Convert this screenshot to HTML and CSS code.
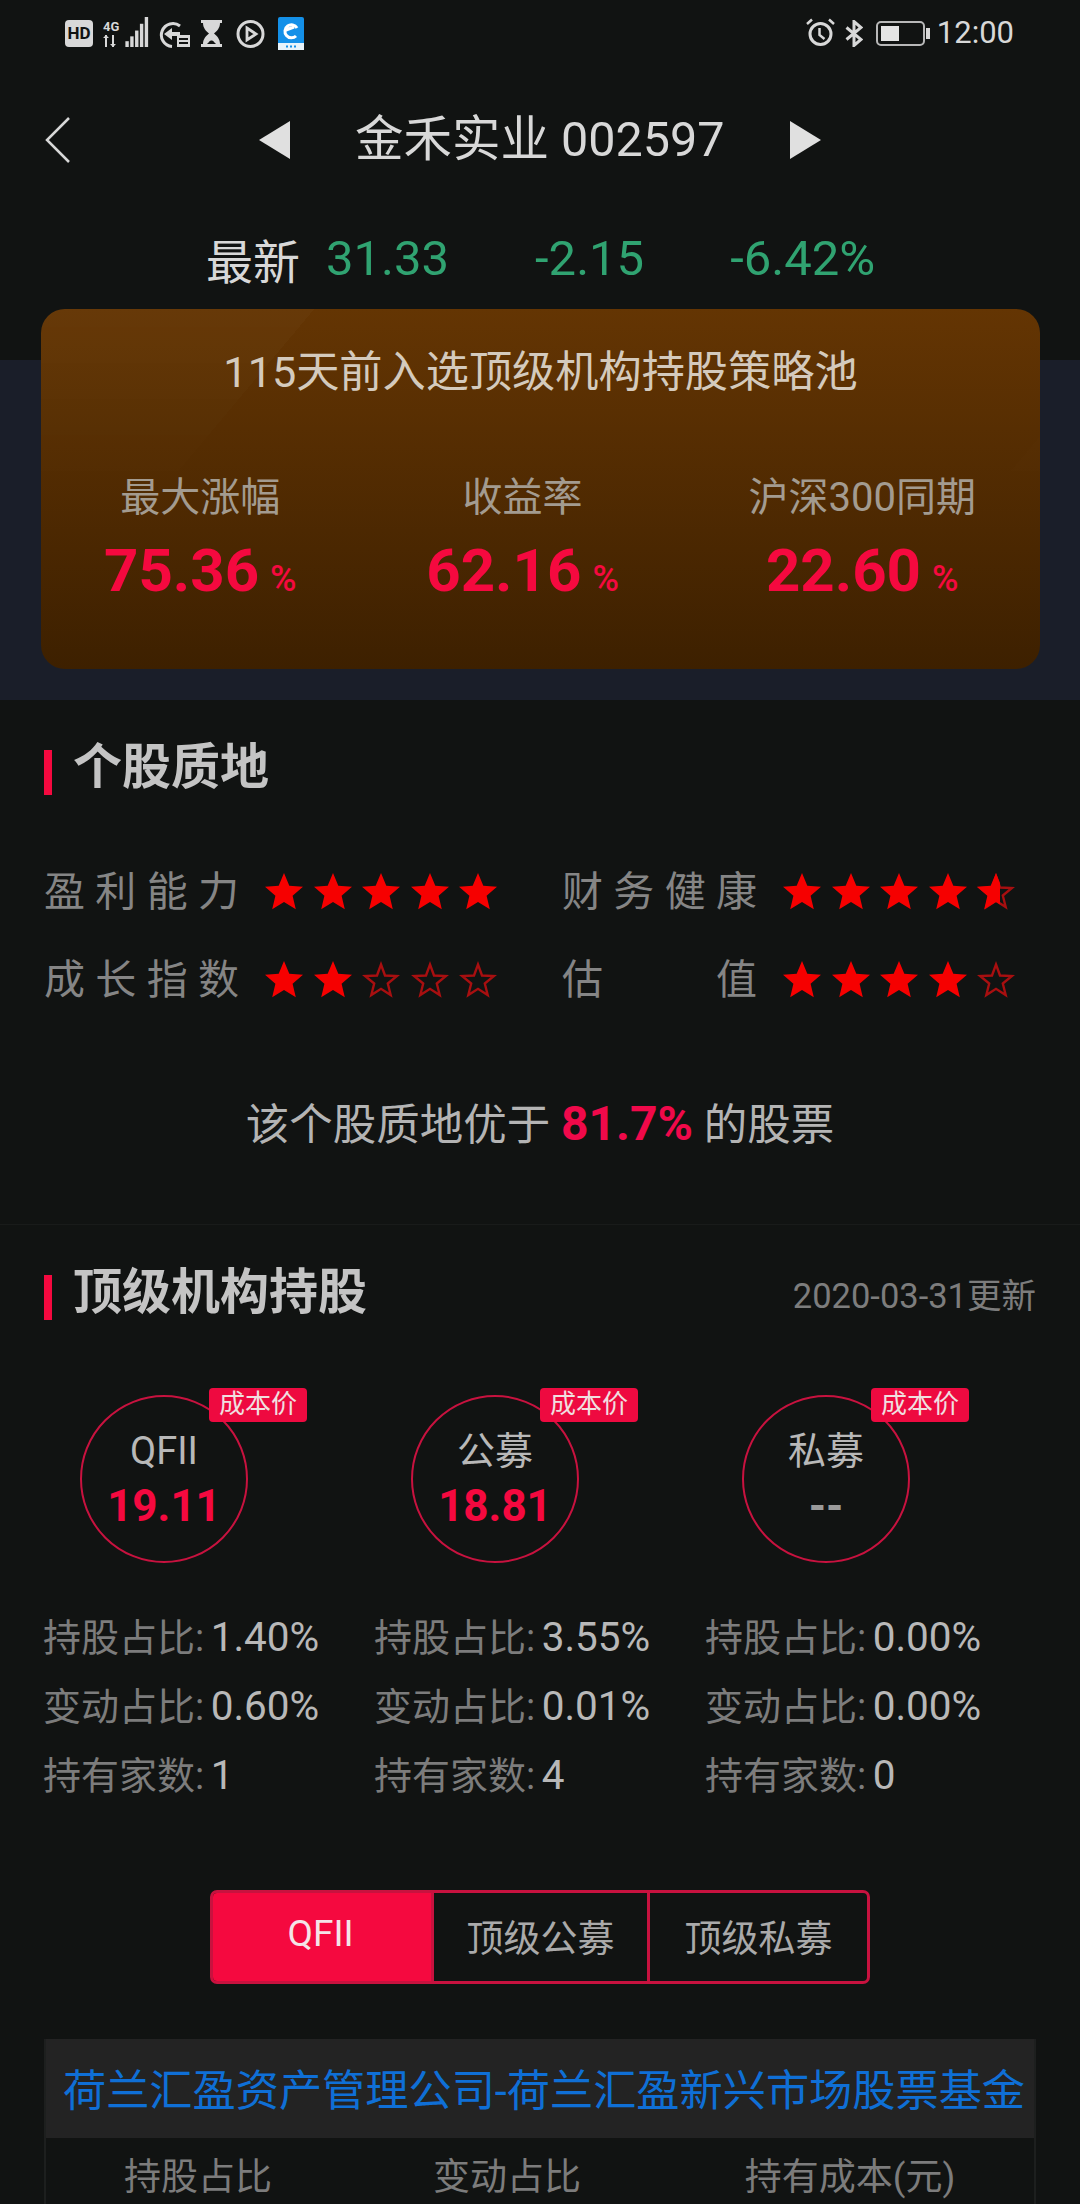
FILE: index.html
```html
<!DOCTYPE html>
<html lang="zh-CN">
<head>
    <meta charset="UTF-8">
    <meta name="viewport" content="width=device-width, initial-scale=1.0">
    <title>金禾实业 002597</title>
    <link rel="stylesheet" href="styles.css">
</head>
<body>
    <svg class="defs" width="0" height="0">
        <symbol id="star-full" viewBox="0 0 38 38">
            <path fill="#f60000" d="M19 0L24.3 12.7L38 13.8L27.6 22.8L30.8 36.2L19 29L7.200 36.2L10.4 22.8L0 13.8L13.7 12.7Z"/>
        </symbol>
        <symbol id="star-empty" viewBox="0 0 38 38">
            <path fill="none" stroke="#a80f10" stroke-width="2.4" d="M19 3.500L23 14.500L35 15L25.800 22.500L28.700 34L19 27.800L9.300 34L12.200 22.500L3 15L15 14.500Z"/>
        </symbol>
        <symbol id="star-half" viewBox="0 0 38 38">
            <path fill="none" stroke="#a80f10" stroke-width="2.4" d="M19 3.500L23 14.500L35 15L25.800 22.500L28.700 34L19 27.800L9.300 34L12.200 22.500L3 15L15 14.500Z"/>
            <path fill="#f60000" d="M19 0L23 10V31.500L19 29L7.200 36.200L10.400 22.800L0 13.800L13.700 12.700Z"/>
        </symbol>
    </svg>

    <div class="page">
        <div class="status-bar">
            <div class="status-left">
                <span class="hd">HD</span>
                <span class="net">
                    <span class="net-label">4G</span>
                    <svg width="15" height="12" viewBox="0 0 15 12"><path fill="#d8d8d8" d="M2 0h2v12H2zM0 3l3-3 3 3zM9 0h2v12H9zM7 9h6l-3 3z"/></svg>
                </span>
                <svg class="signal" width="24" height="31" viewBox="0 0 24 31">
                    <rect x="0" y="25" width="3.500" height="6" fill="#d8d8d8"/>
                    <rect x="5" y="20" width="3.500" height="11" fill="#d8d8d8"/>
                    <rect x="10" y="14" width="3.500" height="17" fill="#d8d8d8"/>
                    <rect x="15" y="7" width="3.500" height="24" fill="#d8d8d8"/>
                    <rect x="20" y="0" width="3.500" height="31" fill="#d8d8d8"/>
                </svg>
                <svg class="vpn" width="32" height="27" viewBox="0 0 32 27">
                    <path fill="none" stroke="#d8d8d8" stroke-width="3" d="M21 5A11.500 11.500 0 1 0 13 25.500"/>
                    <path fill="#d8d8d8" d="M5 13l8-6v4h8v4h-8v4z"/>
                    <rect x="18" y="14" width="13" height="12" fill="#d8d8d8"/>
                    <path stroke="#111312" stroke-width="2" d="M20 18h9M20 22h9"/>
                </svg>
                <svg class="hourglass" width="23" height="27" viewBox="0 0 23 27">
                    <path fill="#d8d8d8" d="M1 0h21v3h-2c0 5-3 8-6 10.500c3 2.500 6 5.500 6 10.500h2v3H1v-3h2c0-5 3-8 6-10.500C6 11 3 8 3 3H1z"/>
                    <path fill="#111312" d="M9 22c1-2 4-2 5 0l2 2H7z"/>
                </svg>
                <svg class="play" width="31" height="28" viewBox="0 0 31 28">
                    <circle cx="15.500" cy="14" r="12.500" fill="none" stroke="#d8d8d8" stroke-width="3"/>
                    <path fill="none" stroke="#d8d8d8" stroke-width="2.800" d="M12 8l9 6-9 6z"/>
                </svg>
                <svg class="app" width="26" height="33" viewBox="0 0 26 33">
                    <rect width="26" height="33" rx="2" fill="#1490e8"/>
                    <path fill="none" stroke="#fff" stroke-width="3" d="M19 11A6.500 6.500 0 1 0 18 19M8 13l8-3"/>
                    <rect y="26" width="26" height="7" fill="#e8f3fb"/>
                    <path stroke="#1490e8" stroke-width="2" d="M8 29.500h2M12 29.500h2M16 29.500h2"/>
                </svg>
            </div>
            <div class="status-right">
                <svg width="29" height="29" viewBox="0 0 29 29">
                    <circle cx="14.500" cy="16" r="10.500" fill="none" stroke="#d8d8d8" stroke-width="3"/>
                    <path fill="none" stroke="#d8d8d8" stroke-width="2.500" d="M13.500 10v7l5 4M1 6l5-4.500M28 6l-5-4.500"/>
                </svg>
                <svg class="bt" width="18" height="27" viewBox="0 0 18 27">
                    <path fill="none" stroke="#d8d8d8" stroke-width="3" d="M1.500 7.500L16 19.500L9 25.500V1.500L16 7.500L1.500 19.500"/>
                </svg>
                <span class="battery"><span class="battery-fill"></span></span>
                <span class="time">12:00</span>
            </div>
        </div>

        <div class="nav">
            <svg class="back" width="25" height="46" viewBox="0 0 25 46">
                <path fill="none" stroke="#d8d8d8" stroke-width="2.500" d="M24 1L2 23L24 45"/>
            </svg>
            <svg class="tri-left" width="31" height="38" viewBox="0 0 31 38"><path fill="#e0e0e0" d="M31 0V38L0 19Z"/></svg>
            <span class="nav-title">金禾实业 002597</span>
            <svg class="tri-right" width="31" height="38" viewBox="0 0 31 38"><path fill="#e0e0e0" d="M0 0V38L31 19Z"/></svg>
        </div>

        <div class="quote">
            <span class="quote-label">最新</span>
            <span class="quote-price">31.33</span>
            <span class="quote-num">-2.15</span>
            <span class="quote-num">-6.42%</span>
        </div>

        <div class="hero">
            <div class="card">
                <div class="card-title">115天前入选顶级机构持股策略池</div>
                <div class="card-stats">
                    <div class="card-stat">
                        <div class="card-label">最大涨幅</div>
                        <div class="card-value">75.36<span class="pct">%</span></div>
                    </div>
                    <div class="card-stat">
                        <div class="card-label">收益率</div>
                        <div class="card-value">62.16<span class="pct">%</span></div>
                    </div>
                    <div class="card-stat">
                        <div class="card-label">沪深300同期</div>
                        <div class="card-value">22.60<span class="pct">%</span></div>
                    </div>
                </div>
            </div>
        </div>

        <div class="section quality">
            <div class="section-head"><h2>个股质地</h2></div>
            <div class="ratings">
                <div class="rating">
                    <span class="rating-label"><i>盈</i><i>利</i><i>能</i><i>力</i></span>
                    <span class="stars">
                        <svg><use href="#star-full"/></svg><svg><use href="#star-full"/></svg><svg><use href="#star-full"/></svg><svg><use href="#star-full"/></svg><svg><use href="#star-full"/></svg>
                    </span>
                </div>
                <div class="rating">
                    <span class="rating-label"><i>财</i><i>务</i><i>健</i><i>康</i></span>
                    <span class="stars">
                        <svg><use href="#star-full"/></svg><svg><use href="#star-full"/></svg><svg><use href="#star-full"/></svg><svg><use href="#star-full"/></svg><svg><use href="#star-half"/></svg>
                    </span>
                </div>
                <div class="rating">
                    <span class="rating-label"><i>成</i><i>长</i><i>指</i><i>数</i></span>
                    <span class="stars">
                        <svg><use href="#star-full"/></svg><svg><use href="#star-full"/></svg><svg><use href="#star-empty"/></svg><svg><use href="#star-empty"/></svg><svg><use href="#star-empty"/></svg>
                    </span>
                </div>
                <div class="rating">
                    <span class="rating-label"><i>估</i><i>值</i></span>
                    <span class="stars">
                        <svg><use href="#star-full"/></svg><svg><use href="#star-full"/></svg><svg><use href="#star-full"/></svg><svg><use href="#star-full"/></svg><svg><use href="#star-empty"/></svg>
                    </span>
                </div>
            </div>
            <div class="quality-line">该个股质地优于 <b>81.7%</b> 的股票</div>
        </div>

        <div class="section holders">
            <div class="section-head">
                <h2>顶级机构持股</h2>
                <span class="update">2020-03-31更新</span>
            </div>

            <div class="holder-grid">
                <div class="holder">
                    <div class="circle">
                        <span class="badge">成本价</span>
                        <div class="circle-name">QFII</div>
                        <div class="circle-value">19.11</div>
                    </div>
                    <div class="holder-row">持股占比: <span>1.40%</span></div>
                    <div class="holder-row">变动占比: <span>0.60%</span></div>
                    <div class="holder-row">持有家数: <span>1</span></div>
                </div>
                <div class="holder">
                    <div class="circle">
                        <span class="badge">成本价</span>
                        <div class="circle-name">公募</div>
                        <div class="circle-value">18.81</div>
                    </div>
                    <div class="holder-row">持股占比: <span>3.55%</span></div>
                    <div class="holder-row">变动占比: <span>0.01%</span></div>
                    <div class="holder-row">持有家数: <span>4</span></div>
                </div>
                <div class="holder">
                    <div class="circle">
                        <span class="badge">成本价</span>
                        <div class="circle-name">私募</div>
                        <div class="circle-value empty">--</div>
                    </div>
                    <div class="holder-row">持股占比: <span>0.00%</span></div>
                    <div class="holder-row">变动占比: <span>0.00%</span></div>
                    <div class="holder-row">持有家数: <span>0</span></div>
                </div>
            </div>

            <div class="tabs">
                <div class="tab active">QFII</div>
                <div class="tab">顶级公募</div>
                <div class="tab">顶级私募</div>
            </div>

            <div class="table">
                <div class="table-title">荷兰汇盈资产管理公司-荷兰汇盈新兴市场股票基金</div>
                <div class="table-head">
                    <span>持股占比</span>
                    <span>变动占比</span>
                    <span>持有成本(元)</span>
                </div>
            </div>
        </div>
    </div>
</body>
</html>
```

FILE: styles.css
```css
html, body {
    margin: 0;
    padding: 0;
}

body {
    width: 1080px;
    height: 2204px;
    overflow: hidden;
    background-color: #111312;
    font-family: Roboto, "Noto Sans CJK SC", sans-serif;
    color: #b8b8b8;
}

.defs {
    position: absolute;
}

.page {
    width: 1080px;
}

/* status bar */
.status-bar {
    height: 66px;
    display: flex;
    justify-content: space-between;
    padding: 0 66px 0 65px;
    box-sizing: border-box;
}

.status-left {
    display: flex;
    align-items: flex-start;
    padding-top: 20px;
}

.hd {
    width: 28px;
    height: 27px;
    border-radius: 4px;
    background-color: #d8d8d8;
    color: #111312;
    font-size: 17px;
    font-weight: 700;
    line-height: 27px;
    text-align: center;
}

.net {
    display: flex;
    flex-direction: column;
    width: 15px;
    margin-left: 10px;
}

.net-label {
    height: 15px;
    font-size: 13px;
    font-weight: 700;
    line-height: 13px;
    color: #d8d8d8;
}

.signal {
    margin-left: 7px;
    margin-top: -3px;
    height: 30px;
}

.vpn {
    margin-left: 10px;
    margin-top: 1px;
}

.hourglass {
    margin-left: 9px;
}

.play {
    margin-left: 12px;
}

.app {
    margin-left: 12px;
    margin-top: -3px;
}

.status-right {
    display: flex;
    align-items: flex-start;
    padding-top: 18px;
}

.bt {
    margin-left: 10px;
    margin-top: 2px;
}

.battery {
    position: relative;
    width: 49px;
    height: 25px;
    margin-left: 13px;
    margin-top: 3px;
    border: 2px solid #b8b8b8;
    border-radius: 5px;
    box-sizing: border-box;
    padding: 3px;
}

.battery::after {
    content: "";
    position: absolute;
    right: -7px;
    top: 5px;
    width: 4px;
    height: 11px;
    background-color: #d8d8d8;
}

.battery-fill {
    display: block;
    width: 18px;
    height: 15px;
    background-color: #e4e4e4;
}

.time {
    margin-left: 12px;
    font-size: 31px;
    line-height: 30px;
    color: #d8d8d8;
}

/* nav */
.nav {
    height: 148px;
    display: flex;
    align-items: center;
    padding-left: 45px;
}

.tri-left {
    margin-left: 189px;
}

.nav-title {
    width: 370px;
    margin: 0 65px;
    font-size: 48.500px;
    line-height: 60px;
    white-space: nowrap;
    color: #d8d8d8;
}

/* quote */
.quote {
    height: 88px;
    display: flex;
    align-items: center;
    padding-left: 206px;
    font-size: 49px;
    color: #30a371;
}

.quote-label {
    color: #d8d8d8;
    font-size: 47px;
}

.quote-price {
    margin-left: 26px;
}

.quote-num {
    margin-left: 86px;
}

/* hero card */
.hero {
    padding: 7px 40px 31px 41px;
    background: linear-gradient(to bottom, transparent 58px, #1a1e29 58px);
}

.card {
    position: relative;
    height: 360px;
    border-radius: 24px;
    overflow: hidden;
    background: linear-gradient(to bottom, #643503, #3d2000);
}

.card::before {
    content: "";
    position: absolute;
    inset: 0;
    background:
        linear-gradient(130deg, rgba(255, 255, 255, 0.025) 21%, transparent 21%),
        linear-gradient(310deg, rgba(255, 255, 255, 0.025) 15%, transparent 15%);
    -webkit-mask-image: linear-gradient(to bottom, #000, transparent 60%);
    mask-image: linear-gradient(to bottom, #000, transparent 60%);
}

.card-title {
    position: relative;
    padding-top: 40px;
    font-size: 43.200px;
    line-height: 48px;
    text-align: center;
    color: #d4cabd;
}

.card-stats {
    position: relative;
    display: flex;
    justify-content: space-between;
    margin-top: 77px;
    padding: 0 64px 0 63px;
}

.card-stat {
    text-align: center;
}

.card-label {
    font-size: 40px;
    line-height: 48px;
    color: #a39b90;
}

.card-value {
    margin-top: 14px;
    font-size: 60px;
    font-weight: 700;
    line-height: 70px;
    color: #f5093f;
}

.pct {
    margin-left: 11px;
    font-size: 36px;
    font-weight: 500;
}

/* sections */
.section {
    padding: 0 44px;
}

.section-head {
    height: 56px;
    display: flex;
    align-items: center;
    justify-content: space-between;
}

.section-head h2 {
    display: flex;
    align-items: center;
    margin: 0;
    font-size: 49px;
    font-weight: 700;
    line-height: 56px;
    color: #c4c4c4;
}

.section-head h2::before {
    content: "";
    width: 8px;
    height: 45px;
    margin: 8px 21px 0 0;
    background-color: #f5093f;
}

.update {
    font-size: 34.500px;
    color: #7d7d7d;
}

.quality {
    padding-top: 40px;
    padding-bottom: 70px;
    border-bottom: 1px solid #191b1a;
}

.ratings {
    display: grid;
    grid-template-columns: 518px 1fr;
    margin-top: 52px;
}

.rating {
    height: 88px;
    display: flex;
    align-items: center;
}

.rating-label {
    width: 195px;
    display: flex;
    justify-content: space-between;
    padding-bottom: 8px;
    font-size: 41px;
    color: #858585;
}

.rating-label i {
    font-style: normal;
}

.stars {
    display: flex;
    gap: 10.500px;
    margin-left: 26px;
}

.stars svg {
    width: 38px;
    height: 38px;
}

.quality-line {
    margin-top: 72px;
    font-size: 43.500px;
    line-height: 56px;
    text-align: center;
    color: #b4b4b4;
}

.quality-line b {
    font-size: 48px;
    color: #f0094a;
}

/* holders */
.holders {
    padding-top: 40px;
}

.holder-grid {
    display: grid;
    grid-template-columns: repeat(3, 331px);
    margin-top: 74px;
}

.circle {
    position: relative;
    width: 168px;
    height: 168px;
    margin: 0 0 40px 36px;
    border: 2.500px solid #c8123f;
    border-radius: 50%;
    box-sizing: border-box;
    text-align: center;
}

.badge {
    position: absolute;
    left: 127px;
    top: -9px;
    width: 98px;
    height: 34px;
    border-radius: 4px;
    background-color: #ee0a40;
    color: #f0e0e0;
    font-size: 26px;
    line-height: 32px;
}

.circle-name {
    margin-top: 29px;
    font-size: 38px;
    line-height: 50px;
    color: #b8b8b8;
}

.circle-value {
    margin-top: 5px;
    font-size: 44px;
    font-weight: 700;
    line-height: 50px;
    color: #f5093f;
}

.circle-value.empty {
    color: #9a9a9a;
}

.holder-row {
    height: 69px;
    margin-left: -1px;
    font-size: 38px;
    line-height: 69px;
    white-space: nowrap;
    color: #7c7c7c;
}

.holder-row span {
    margin-left: -3px;
    font-size: 40.500px;
    color: #b8b8b8;
}

.tabs {
    width: 660px;
    height: 94px;
    display: grid;
    grid-template-columns: 218px 216px 220px;
    margin: 80px 0 55px 166px;
    border-radius: 7px;
    overflow: hidden;
    box-sizing: border-box;
    border: 3px solid #c8123f;
}

.tab {
    padding-top: 3px;
    font-size: 37px;
    line-height: 88px;
    text-align: center;
    color: #aaaaaa;
    border-left: 3px solid #c8123f;
}

.tab.active {
    padding-top: 0;
    line-height: 88px;
    margin: -3px 0 -3px -3px;
    height: 94px;
    border-left: 0;
    background-color: #f5093f;
    color: #f4e4e8;
}

.table {
    width: 992px;
    border-left: 2px solid #1d1f1e;
    border-right: 2px solid #1d1f1e;
    box-sizing: border-box;
}

.table-title {
    height: 99px;
    padding-left: 8px;
    box-sizing: border-box;
    background-color: #232323;
    font-size: 43.200px;
    line-height: 106px;
    text-align: center;
    white-space: nowrap;
    color: #0f6fd6;
}

.table-head {
    display: grid;
    grid-template-columns: 304px 314px 372px;
    height: 80px;
    font-size: 37px;
    line-height: 80px;
    text-align: center;
    color: #7c7c7c;
}
```
